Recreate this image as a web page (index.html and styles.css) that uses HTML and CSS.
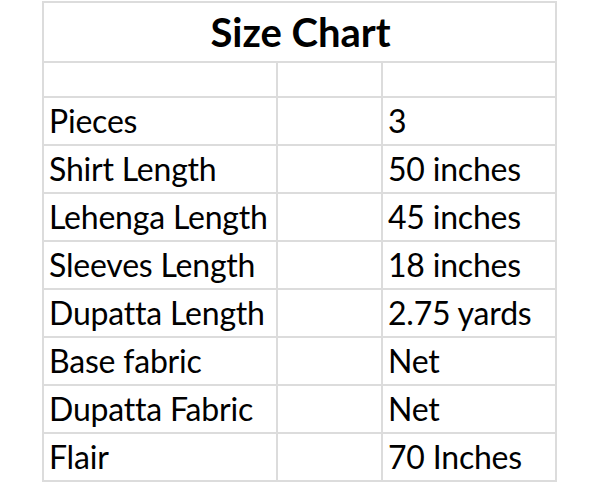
FILE: index.html
```html
<!DOCTYPE html>
<html>
<head>
<meta charset="utf-8">
<link rel="stylesheet" href="styles.css">
</head>
<body>
<div class="sheet">
  <div class="cell title">Size Chart</div>
  <div class="cell blank"></div><div class="cell blank"></div><div class="cell blank"></div>
  <div class="cell">Pieces</div><div class="cell"></div><div class="cell">3</div>
  <div class="cell">Shirt Length</div><div class="cell"></div><div class="cell">50 inches</div>
  <div class="cell">Lehenga Length</div><div class="cell"></div><div class="cell">45 inches</div>
  <div class="cell">Sleeves Length</div><div class="cell"></div><div class="cell">18 inches</div>
  <div class="cell">Dupatta Length</div><div class="cell"></div><div class="cell">2.75 yards</div>
  <div class="cell">Base fabric</div><div class="cell"></div><div class="cell">Net</div>
  <div class="cell">Dupatta Fabric</div><div class="cell"></div><div class="cell">Net</div>
  <div class="cell">Flair</div><div class="cell"></div><div class="cell">70 Inches</div>
</div>
</body>
</html>
```
FILE: styles.css
```css
html, body {
  margin: 0;
  padding: 0;
  background: #ffffff;
}
body {
  padding: 1px 0 0 42px;
  font-family: "Lato", "Liberation Sans", sans-serif;
  color: #000;
}
.sheet {
  display: grid;
  grid-template-columns: 232px 103px 172px;
  grid-template-rows: 58px 33px repeat(8, 46px);
  gap: 2px;
  padding: 2px;
  background: #dcdcdc;
  width: max-content;
}
.cell {
  background: #ffffff;
  font-size: 32px;
  line-height: 46px;
  padding-left: 5px;
  white-space: nowrap;
  overflow: visible;
  letter-spacing: -0.2px;
}
.title {
  grid-column: 1 / span 3;
  text-align: center;
  font-weight: 700;
  font-size: 40px;
  line-height: 58px;
  padding-left: 2px;
  letter-spacing: 0;
}
.blank {
  line-height: 33px;
}
```
